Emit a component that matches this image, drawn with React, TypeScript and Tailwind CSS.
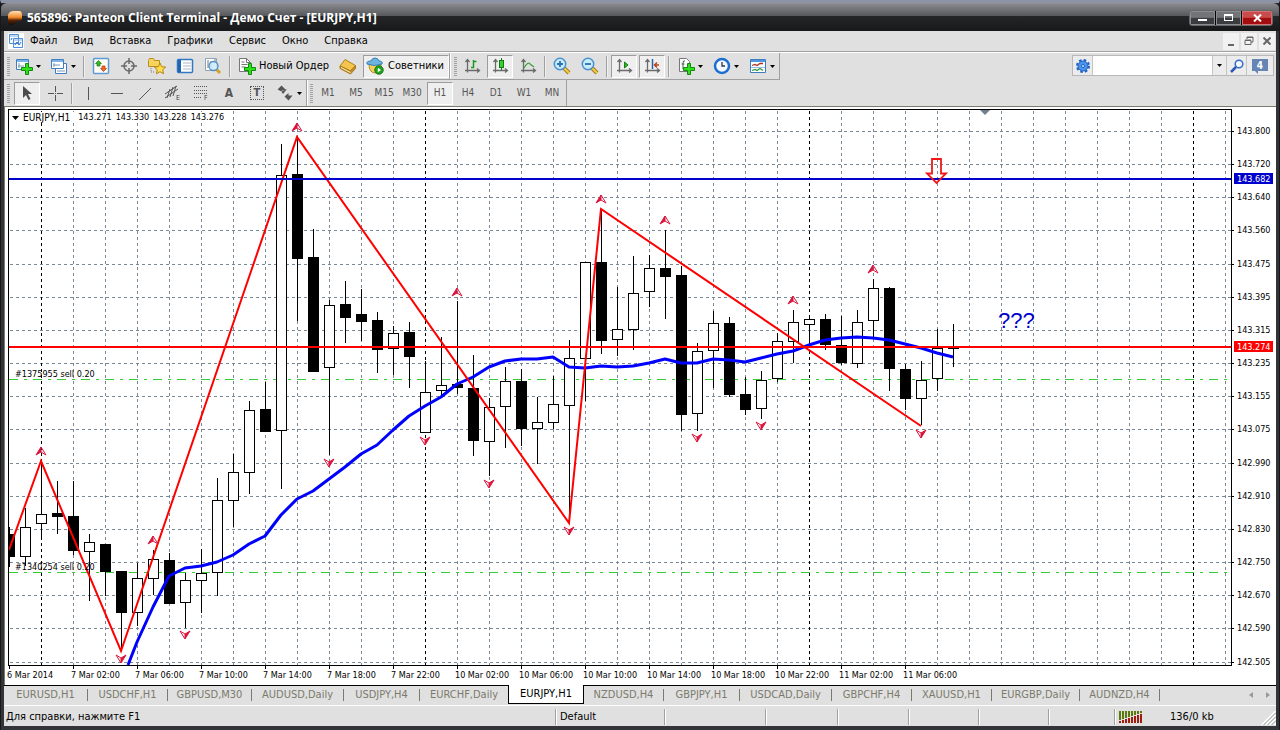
import type { ReactNode } from "react";

type Candle = [high: number, low: number, top: number, bottom: number, filled: boolean];

// one entry per hour: wick top, wick bottom, body top, body bottom, bearish
const candles: Candle[] = [
  [417, 457, 424, 447, true],
  [398, 456, 417, 447, false],
  [351, 427, 404, 414, false],
  [371, 424, 403, 407, true],
  [371, 445, 406, 441, true],
  [424, 491, 432, 442, false],
  [434, 486, 434, 462, true],
  [461, 540, 461, 503, true],
  [453, 516, 468, 503, false],
  [440, 485, 449, 469, false],
  [443, 494, 450, 494, true],
  [463, 518, 470, 493, false],
  [439, 503, 463, 471, false],
  [368, 486, 390, 463, false],
  [344, 417, 362, 391, false],
  [291, 384, 300, 363, false],
  [272, 322, 299, 322, true],
  [34, 379, 65, 321, false],
  [28, 211, 64, 149, true],
  [119, 262, 147, 262, true],
  [190, 345, 195, 258, false],
  [171, 233, 194, 208, true],
  [179, 231, 204, 212, true],
  [202, 263, 210, 240, true],
  [216, 265, 223, 239, false],
  [212, 278, 222, 247, true],
  [251, 323, 282, 323, false],
  [227, 287, 275, 281, false],
  [191, 284, 274, 278, true],
  [245, 346, 278, 331, true],
  [288, 366, 297, 332, false],
  [257, 338, 271, 297, false],
  [259, 336, 271, 319, true],
  [287, 354, 312, 319, false],
  [266, 319, 294, 313, false],
  [230, 403, 248, 296, false],
  [152, 291, 152, 249, false],
  [100, 244, 152, 231, true],
  [177, 246, 219, 230, false],
  [146, 240, 183, 220, false],
  [145, 197, 158, 182, false],
  [120, 209, 158, 167, true],
  [156, 321, 165, 305, true],
  [233, 321, 241, 304, false],
  [201, 278, 213, 241, false],
  [207, 287, 213, 285, true],
  [267, 305, 284, 300, true],
  [261, 309, 270, 299, false],
  [223, 272, 231, 269, false],
  [200, 253, 212, 232, false],
  [207, 237, 209, 215, false],
  [204, 240, 209, 235, true],
  [206, 255, 235, 253, true],
  [200, 258, 212, 254, false],
  [169, 227, 178, 211, false],
  [177, 281, 178, 259, true],
  [254, 300, 259, 289, true],
  [251, 315, 270, 289, false],
  [219, 281, 238, 269, false],
  [214, 257, 238, 239, true],
];

const average = [
  532, 497, 466, 458, 456, 452, 445, 434, 426, 405, 389, 381, 369, 357, 344, 335, 320, 306, 296, 287,
  274, 267, 257, 251, 249, 249, 247, 257, 258, 256, 257, 256, 253, 249, 253, 253, 249, 250, 252, 248,
  244, 241, 235, 230, 228, 227, 228, 230, 234, 238, 243, 247,
];

const zigzag = "0,440 32,351 112,541 288,27 560,413 592,99 912,316";

const upFractals = [[32, 341], [144, 430], [288, 17], [448, 182], [592, 89], [656, 110], [784, 190], [864, 159]];
const downFractals = [
  [112, 549], [176, 525], [320, 353], [416, 331], [480, 374], [560, 421], [688, 328], [752, 316], [912, 324],
];

const prices: [string, number][] = [
  ["143.800", 21], ["143.720", 54], ["143.640", 87], ["143.560", 120], ["143.475", 154], ["143.395", 187],
  ["143.315", 220], ["143.235", 253], ["143.155", 286], ["143.075", 319], ["142.990", 353], ["142.910", 386],
  ["142.830", 419], ["142.750", 452], ["142.670", 485], ["142.590", 518], ["142.505", 552],
];

const times = [
  "6 Mar 2014", "7 Mar 02:00", "7 Mar 06:00", "7 Mar 10:00", "7 Mar 14:00", "7 Mar 18:00", "7 Mar 22:00",
  "10 Mar 02:00", "10 Mar 06:00", "10 Mar 10:00", "10 Mar 14:00", "10 Mar 18:00", "10 Mar 22:00",
  "11 Mar 02:00", "11 Mar 06:00",
];

const tabs = [
  { name: "EURUSD,H1", width: "w-[84px]" },
  { name: "USDCHF,H1", width: "w-[80px]" },
  { name: "GBPUSD,M30", width: "w-[84px]" },
  { name: "AUDUSD,Daily", width: "w-[92px]" },
  { name: "USDJPY,H4", width: "w-[76px]" },
  { name: "EURCHF,Daily", width: "w-[88px]" },
  { name: "EURJPY,H1", width: "w-[76px]", active: true },
  { name: "NZDUSD,H4", width: "w-[80px]" },
  { name: "GBPJPY,H1", width: "w-[76px]" },
  { name: "USDCAD,Daily", width: "w-[92px]" },
  { name: "GBPCHF,H4", width: "w-[80px]" },
  { name: "XAUUSD,H1", width: "w-[80px]" },
  { name: "EURGBP,Daily", width: "w-[88px]" },
  { name: "AUDNZD,H4", width: "w-[80px]" },
];

const menu = ["Файл", "Вид", "Вставка", "Графики", "Сервис", "Окно", "Справка"];
const periods = ["M1", "M5", "M15", "M30", "H1", "H4", "D1", "W1", "MN"];

function Icon({ children }: { children: ReactNode }) {
  return (
    <svg width="18" height="18" viewBox="0 0 18 18" fill="none" className="shrink-0" aria-hidden>
      {children}
    </svg>
  );
}

function Caret() {
  return (
    <svg width="5" height="3" viewBox="0 0 5 3" className="shrink-0" aria-hidden>
      <path d="M0 0h5L2.500 3z" fill="#000" />
    </svg>
  );
}

function ToolButton({ label, pressed, menu, children }: { label: string; pressed?: boolean; menu?: boolean; children: ReactNode }) {
  return (
    <button
      aria-label={label}
      aria-pressed={pressed}
      className={`flex h-[23px] shrink-0 items-center ${menu ? "w-[34px] gap-[3px] pl-1" : "w-[26px] justify-center"} ${
        pressed ? "border border-b-white border-r-white border-l-[#9c9c9c] border-t-[#9c9c9c] bg-[#efefef]" : ""
      }`}
    >
      {children}
      {menu && <Caret />}
    </button>
  );
}

function Grip() {
  return (
    <div className="h-[19px] w-[3px] shrink-0 bg-[repeating-linear-gradient(180deg,#a2a2a2_0px,#a2a2a2_1px,#e0e0e0_1px,#e0e0e0_2px)]" />
  );
}

function Divider() {
  return <div className="mx-[1px] h-[21px] w-[2px] shrink-0 border-l border-[#a0a0a0] bg-[#f0f0f0]" />;
}

function Plus() {
  return <path d="M10.500 6.500h3v4h4v3h-4v4h-3v-4h-4v-3h4z" fill="#2fe01c" stroke="#118a0c" />;
}

function Axes() {
  return <path d="M4.500 3v12.500M2 13.500h14M2.500 5l2-2.500 2 2.500M14 11.500l2.500 2-2.500 2" stroke="#6b6b6b" strokeWidth="1.300" />;
}

function Magnifier({ plus }: { plus?: boolean }) {
  return (
    <Icon>
      <path d="M11 11l5 5" stroke="#a8781c" strokeWidth="4" />
      <path d="M11 11l5 5" stroke="#f3cf4a" strokeWidth="2" />
      <circle cx="7" cy="7" r="5.700" fill="#c6edf8" stroke="#4a90cf" strokeWidth="1.500" />
      <path d={plus ? "M4 7h6M7 4v6" : "M4 7h6"} stroke="#2f6fb4" strokeWidth="1.800" />
    </Icon>
  );
}

function TitleBar() {
  return (
    <header className="flex h-[28px] items-center rounded-t-md border-t border-[#8f9095] bg-[linear-gradient(180deg,#88898c_0%,#56575a_45%,#252628_46%,#17181a_100%)] pl-[6px] pr-[7px]">
      <svg width="16" height="16" viewBox="0 0 16 16" aria-hidden>
        <defs>
          <linearGradient id="logo" x1="0" y1="0" x2="0" y2="1">
            <stop offset="0" stopColor="#ffe0b0" />
            <stop offset=".45" stopColor="#f28a2c" />
            <stop offset=".65" stopColor="#5a2708" />
            <stop offset="1" stopColor="#170a04" />
          </linearGradient>
        </defs>
        <path d="M1 5q1-4 6-4h5q3 0 3 4v3q0 3-3 3-3 0-4 2-1 2-4 2-3 0-3-4z" fill="url(#logo)" />
      </svg>
      <h1 className="ml-1 flex-1 whitespace-nowrap font-['Open_Sans','Noto_Sans',sans-serif] text-[12px] font-bold leading-4 text-white">
        565896: Panteon Client Terminal - Демо Счет - [EURJPY,H1]
      </h1>
      <div className="flex h-[14px] gap-px rounded-xs bg-black outline outline-[#66676a]">
        <button aria-label="Minimize" className="flex w-[25px] items-center justify-center border border-[#8c8d90] bg-[linear-gradient(180deg,#737477_45%,#3b3c3f_50%)]">
          <span className="mt-1 h-[2px] w-[9px] bg-white" />
        </button>
        <button aria-label="Maximize" className="flex w-[25px] items-center justify-center border border-[#8c8d90] bg-[linear-gradient(180deg,#737477_45%,#3b3c3f_50%)]">
          <span className="h-[7px] w-[9px] border border-t-2 border-white" />
        </button>
        <button aria-label="Close" className="flex w-[30px] items-center justify-center border border-[#d27373] bg-[linear-gradient(180deg,#c94b4b_45%,#a30d10_50%)]">
          <svg width="9" height="8" viewBox="0 0 9 8" aria-hidden>
            <path d="M1 0.500l7 7M8 0.500l-7 7" stroke="#fff" strokeWidth="2" />
          </svg>
        </button>
      </div>
    </header>
  );
}

function MenuBar() {
  return (
    <nav className="flex h-[20px] items-center bg-[#e0e0e0] pl-1">
      <svg width="16" height="16" viewBox="0 0 16 16" className="bg-white" fill="none" aria-hidden>
        <path d="M1.500 1.500h9v9h-9zM5.500 5.500h9v9h-9z" fill="#f4f9ff" stroke="#4d8fd8" />
        <path d="M2 3h8M6 7h8" stroke="#8ab6e8" />
        <path d="M7 12l2-3 2 3 2-3M3 7l1-2" stroke="#2f6fc0" />
      </svg>
      <ul className="-ml-[2px] flex text-[11px] leading-4">
        {menu.map((item) => (
          <li key={item}>
            <button className="px-2">{item}</button>
          </li>
        ))}
      </ul>
      <div className="ml-auto flex gap-[2px] pr-px text-[#5c5c5c]">
        <button aria-label="Minimize chart" className="flex h-[17px] w-4 items-center justify-center bg-[#f1f1f1]">
          <span className="mt-2 h-[2px] w-[6px] bg-[#666]" />
        </button>
        <button aria-label="Restore chart" className="flex h-[17px] w-4 items-center justify-center bg-[#f1f1f1]">
          <svg width="10" height="10" viewBox="0 0 10 10" fill="none" aria-hidden>
            <path d="M3 3V1h6v5H7M1 4.500h6v4H1zM1 4h6M3 1.500h6" stroke="#666" />
          </svg>
        </button>
        <button aria-label="Close chart" className="flex h-[17px] w-4 items-center justify-center bg-[#f1f1f1]">
          <svg width="8" height="8" viewBox="0 0 8 8" aria-hidden>
            <path d="M.5.5l7 7M7.500.5l-7 7" stroke="#666" strokeWidth="2" />
          </svg>
        </button>
      </div>
    </nav>
  );
}

function StandardToolbar() {
  return (
    <div className="flex h-[27px] items-center border-b border-[#a0a0a0] pl-[3px]">
      <Grip />
      <div className="ml-px flex items-center gap-px">
        <ToolButton label="New chart" menu>
          <Icon>
            <path d="M1.500 2.500h12v10h-12z" fill="#fff" stroke="#3f7fc0" />
            <path d="M2 4h11" stroke="#7fb2e6" strokeWidth="2" />
            <path d="M4 6v5M3 9h6" stroke="#7a96b8" />
            <Plus />
          </Icon>
        </ToolButton>
        <ToolButton label="Profiles" menu>
          <Icon>
            <path d="M5.500 6.500h11v10h-11z" fill="#fff" stroke="#3f7fc0" />
            <path d="M1.500 2.500h12v9h-12z" fill="#fff" stroke="#3f7fc0" />
            <path d="M2 4h11" stroke="#7fb2e6" strokeWidth="2" />
            <path d="M4 6v4M3 8h7M7 14h8" stroke="#7a96b8" />
          </Icon>
        </ToolButton>
      </div>
      <div className="ml-[2px] flex items-center gap-[2px]">
        <Divider />
        <ToolButton label="Market watch">
          <Icon>
            <rect x="1.500" y="1.500" width="15" height="15" rx="1" fill="#fffef5" stroke="#5c9bd8" strokeWidth="1.500" />
            <path d="M6.500 3.500l3 3H8v2.500H5V6.500H3.500z" fill="#34b926" stroke="#1b7a12" strokeWidth=".7" />
            <path d="M11.500 14.500l-3-3H10V9h3v2.500h1.500z" fill="#f0692c" stroke="#b33b0c" strokeWidth=".7" />
          </Icon>
        </ToolButton>
        <ToolButton label="Data window">
          <Icon>
            <circle cx="9" cy="9" r="5" stroke="#6a6a6a" strokeWidth="1.500" />
            <path d="M9 1v6M9 11v6M1 9h6M11 9h6" stroke="#6a6a6a" strokeWidth="1.500" />
          </Icon>
        </ToolButton>
        <ToolButton label="Navigator">
          <Icon>
            <path d="M.5 3.500l1-2h4l1 2h5v6H.5z" fill="#f7d45c" stroke="#b98d20" />
            <path d="M3 11v4h4" stroke="#777" strokeDasharray="1 1" />
            <path d="M12 6l1.700 3.700 4 .4-3 2.700.9 4-3.600-2.100-3.600 2.100.9-4-3-2.700 4-.4z" fill="#ffdf4f" stroke="#b98412" />
          </Icon>
        </ToolButton>
        <ToolButton label="Terminal">
          <Icon>
            <rect x="1.500" y="2.500" width="15" height="13" rx="1" fill="#fff" stroke="#2f78c4" strokeWidth="1.500" />
            <path d="M3.500 3v12" stroke="#2164b0" strokeWidth="3" />
            <path d="M7 6h8M7 9h8M7 12h8" stroke="#a9b7c6" />
          </Icon>
        </ToolButton>
        <ToolButton label="Strategy tester">
          <Icon>
            <path d="M1.500 1.500h11v12h-11z" fill="#fff" stroke="#8fa3b8" />
            <path d="M4 3v8M7 4v7M11 2v4" stroke="#7a7a7a" />
            <path d="M12 12l4 4" stroke="#d6a021" strokeWidth="3" />
            <circle cx="9.500" cy="9" r="4.500" fill="#cdeafa" fillOpacity=".85" stroke="#4c8fca" strokeWidth="1.300" />
          </Icon>
        </ToolButton>
        <Divider />
        <button className="flex h-[23px] w-[99px] shrink-0 items-center gap-[3px] whitespace-nowrap pl-1 text-[11px]">
          <Icon>
            <path d="M1.500 1.500h7l4 4v9h-11z" fill="#fff" stroke="#777" />
            <path d="M8.500 1.500v4h4M3.500 5h3M3.500 7.500h6M3.500 10h4" stroke="#777" />
            <Plus />
          </Icon>
          Новый Ордер
        </button>
        <ToolButton label="MetaEditor">
          <Icon>
            <path d="M6 2.500l10.500 6-5 5.500L1 9z" fill="#f3c54c" stroke="#b0811c" />
            <path d="M1 9v2.500L11.500 17l5-5.500v-3L11.500 14z" fill="#c7922a" stroke="#a87718" />
            <path d="M2 10.500l9.500 5" stroke="#fff3c0" />
          </Icon>
        </ToolButton>
        <button
          aria-pressed
          className="flex h-[23px] w-[86px] shrink-0 items-center gap-1 whitespace-nowrap border border-b-white border-l-[#9c9c9c] border-r-white border-t-[#9c9c9c] bg-[#efefef] pl-[2px] text-[11px]"
        >
          <Icon>
            <path d="M3 7q0 9 6.500 9T15 7z" fill="#f5cf55" stroke="#b58a24" />
            <path d="M1 7q-1-3 4-3 1-3 4-3t4 3q4 0 3 3-7 3-15 0z" fill="#6db3df" stroke="#3580b4" />
            <circle cx="13" cy="13" r="4.200" fill="#23a522" stroke="#0f7414" />
            <path d="M11.800 10.800l3.200 2.200-3.200 2.200z" fill="#fff" />
          </Icon>
          Советники
        </button>
      </div>
      <div className="h-full w-[2px] shrink-0 border-l border-[#a0a0a0] bg-white" />
      <div className="ml-[3px] flex h-full items-center gap-[2px] border-r border-[#a0a0a0]">
        <Grip />
        <ToolButton label="Bar chart">
          <Icon>
            <Axes />
            <path d="M10.500 3v8M10.500 4.500h3M8 10.500h3" stroke="#1e9a1d" strokeWidth="1.500" />
          </Icon>
        </ToolButton>
        <ToolButton label="Candlesticks" pressed>
          <Icon>
            <Axes />
            <path d="M10.500 1v12" stroke="#137a12" />
            <rect x="8.500" y="3.500" width="4" height="7" fill="#36d22c" stroke="#137a12" />
          </Icon>
        </ToolButton>
        <ToolButton label="Line chart">
          <Icon>
            <Axes />
            <path d="M5 11q4-7 6-4l4 3" stroke="#3da33a" strokeWidth="1.300" />
          </Icon>
        </ToolButton>
        <Divider />
        <ToolButton label="Zoom in">
          <Magnifier plus />
        </ToolButton>
        <ToolButton label="Zoom out">
          <Magnifier />
        </ToolButton>
        <Divider />
        <ToolButton label="Auto scroll" pressed>
          <Icon>
            <Axes />
            <path d="M9.500 5v6l3.500-3z" fill="#2eb82b" stroke="#168015" />
          </Icon>
        </ToolButton>
        <ToolButton label="Chart shift" pressed>
          <Icon>
            <Axes />
            <path d="M9.500 2v10" stroke="#2860a8" strokeWidth="1.500" />
            <path d="M16 8h-4M14 5.500L11.500 8l2.500 2.500" stroke="#c0401c" strokeWidth="1.500" />
          </Icon>
        </ToolButton>
        <Divider />
        <ToolButton label="Indicators" menu>
          <Icon>
            <path d="M2.500 1.500h7l3 3v10h-10z" fill="#fff" stroke="#777" />
            <path d="M8 4q-2-1-2 2v6M4.500 7h3" stroke="#555" />
            <Plus />
          </Icon>
        </ToolButton>
        <ToolButton label="Periods" menu>
          <Icon>
            <circle cx="9" cy="9" r="7" fill="#f3f9ff" stroke="#1c6fd0" strokeWidth="2.500" />
            <path d="M9 5v4h3" stroke="#334" strokeWidth="1.300" />
          </Icon>
        </ToolButton>
        <ToolButton label="Templates" menu>
          <Icon>
            <path d="M1.500 2.500h15v13h-15z" fill="#fff" stroke="#3d7dc0" />
            <path d="M2 4h14" stroke="#4f96df" strokeWidth="2" />
            <path d="M3 8.500l3-1 2 1 3-2 3 0" stroke="#a83220" strokeWidth="1.300" />
            <path d="M3 13.500l3-1 2 1 3-2 3 2" stroke="#2d9a3c" strokeWidth="1.300" />
            <path d="M2 10.500h14" stroke="#9abbe0" />
          </Icon>
        </ToolButton>
      </div>
    </div>
  );
}

function SearchBox() {
  return (
    <form className="mr-[2px] mt-[3px] flex h-[21px] shrink-0 border border-[#b8b8b8] bg-[#ececec]">
      <button type="button" aria-label="Search settings" className="flex w-[19px] items-center justify-center">
        <svg width="16" height="16" viewBox="0 0 16 16" fill="none" aria-hidden>
          <circle cx="8" cy="8" r="6" stroke="#1d62c4" strokeWidth="2" strokeDasharray="2.600 2.100" />
          <circle cx="8" cy="8" r="5" fill="#4a94ea" stroke="#1d62c4" />
          <circle cx="8" cy="8" r="1.500" fill="#dbeaff" stroke="#1d62c4" />
        </svg>
      </button>
      <input aria-label="Search" className="w-[121px] border-x border-[#c4c4c4] bg-white px-1 text-[11px] outline-none" />
      <button type="button" aria-label="Search history" className="flex w-[14px] items-center justify-center border-r border-[#c4c4c4]">
        <Caret />
      </button>
      <button aria-label="Find" className="flex w-[20px] items-center justify-center border-r border-[#c4c4c4]">
        <svg width="14" height="14" viewBox="0 0 14 14" fill="none" aria-hidden>
          <circle cx="9" cy="5" r="3.800" fill="#f2f8ff" stroke="#3467c8" strokeWidth="1.500" />
          <path d="M6 8l-5 5" stroke="#2c58b4" strokeWidth="2.500" />
        </svg>
      </button>
      <button type="button" aria-label="Messages" className="flex w-[26px] items-center justify-center">
        <svg width="16" height="16" viewBox="0 0 16 16">
          <path d="M0 1h16v12H6v3l-3-3H0z" fill="#6684b4" />
          <text x="8" y="11" textAnchor="middle" fontSize="10" fontWeight="bold" fill="#fff">4</text>
        </svg>
      </button>
    </form>
  );
}

function LineToolbar() {
  return (
    <div className="flex h-[26px] items-center pl-[3px] text-[#555]">
      <Grip />
      <div className="ml-1 flex items-center gap-[2px]">
        <ToolButton label="Cursor" pressed>
          <Icon>
            <path d="M5 2v12l3-3 2.500 5 2-1-2.500-5h4z" fill="#4c4c4c" />
          </Icon>
        </ToolButton>
        <ToolButton label="Crosshair">
          <Icon>
            <path d="M9.500 2v6M9.500 11v6M2 9.500h6M11 9.500h6M9 9.500h1" stroke="#555" />
          </Icon>
        </ToolButton>
        <Divider />
        <ToolButton label="Vertical line">
          <Icon>
            <path d="M8.500 3v13" stroke="#555" />
          </Icon>
        </ToolButton>
        <ToolButton label="Horizontal line">
          <Icon>
            <path d="M3 9.500h12" stroke="#555" />
          </Icon>
        </ToolButton>
        <ToolButton label="Trend line">
          <Icon>
            <path d="M3 16L15 4" stroke="#555" />
          </Icon>
        </ToolButton>
        <ToolButton label="Equidistant channel">
          <Icon>
            <path d="M1 10L13 2M1 14L14 5M3 14L6 5M6 13L9 3M9 12l3-10" stroke="#555" />
            <text x="12" y="16" fontSize="7" fill="#444">E</text>
          </Icon>
        </ToolButton>
        <ToolButton label="Fibonacci retracement">
          <Icon>
            <path d="M2 2.500h14M2 6.500h14M2 9.500h14M2 13.500h8" stroke="#555" strokeDasharray="1 1" />
            <text x="12" y="16" fontSize="7" fill="#444">F</text>
          </Icon>
        </ToolButton>
        <ToolButton label="Text">
          <span className="text-[12px] font-bold leading-4">A</span>
        </ToolButton>
        <ToolButton label="Text label">
          <span className="flex size-[14px] items-center justify-center border border-dotted border-[#555] text-[11px] font-bold leading-3">T</span>
        </ToolButton>
        <ToolButton label="Arrows" menu>
          <Icon>
            <path d="M5.500 1.500l4 4-4 2-4-2zM5 7l2 3 4-5M12.500 9v2.500h4l-4 5-4-4z" fill="#555" />
          </Icon>
        </ToolButton>
      </div>
      <div className="h-full w-[2px] shrink-0 border-l border-[#a0a0a0] bg-white" />
      <div className="ml-[2px] flex h-full items-center gap-[2px] border-r border-[#a0a0a0] pr-px">
        <Grip />
        {periods.map((period) => (
          <button
            key={period}
            aria-pressed={period === "H1"}
            className={`h-[23px] w-[26px] shrink-0 text-center text-[10px] leading-5 ${
              period === "H1" ? "border border-b-white border-l-[#9c9c9c] border-r-white border-t-[#9c9c9c] bg-[#efefef]" : ""
            }`}
          >
            {period}
          </button>
        ))}
      </div>
    </div>
  );
}

function Grid() {
  return (
    <g shapeRendering="crispEdges" strokeDasharray="3 3">
      {prices.map(([price, y]) => (
        <line key={price} x1="1" x2="100%" y1={y + 0.5} y2={y + 0.5} stroke="#778899" />
      ))}
      {Array.from({ length: 38 }, (_, i) => 32 + i * 32).map((x) => (
        <line key={x} x1={x + 0.5} x2={x + 0.5} y1="1" y2="100%" stroke={x % 384 === 32 ? "#000" : "#778899"} />
      ))}
    </g>
  );
}

function Plot() {
  return (
    <svg className="block h-full w-full" aria-label="EURJPY hourly chart" role="img">
      <Grid />
      <g stroke="#32cd32" strokeDasharray="9 6 3 6" shapeRendering="crispEdges">
        <line x1="0" x2="100%" y1="269.500" y2="269.500" />
        <line x1="0" x2="100%" y1="462.500" y2="462.500" />
      </g>
      <g shapeRendering="crispEdges">
        {candles.map(([high, low, top, bottom, filled], i) => (
          <g key={i}>
            <rect x={i * 16} y={high} width="1" height={low - high} fill="#000" />
            <rect x={i * 16 - 5} y={top} width="11" height={Math.max(bottom - top, 1)} fill="#000" />
            {!filled && <rect x={i * 16 - 4} y={top + 1} width="9" height={bottom - top - 2} fill="#fff" />}
          </g>
        ))}
      </g>
      <polyline
        points={`119,555 ${average.map((y, i) => `${128 + i * 16},${y}`).join(" ")}`}
        fill="none"
        stroke="#0000ff"
        strokeWidth="3"
        strokeLinejoin="round"
      />
      <polyline points={zigzag} fill="none" stroke="#ff0000" strokeWidth="2" />
      <g fill="#dc143c" stroke="#dc143c">
        {upFractals.map(([x, y]) => (
          <g key={x}>
            <path d={`M${x} ${y - 4}L${x - 5} ${y + 4}L${x} ${y + 1}z`} />
            <path d={`M${x} ${y - 4}L${x + 5} ${y + 4}L${x} ${y + 1}`} fill="none" />
          </g>
        ))}
        {downFractals.map(([x, y]) => (
          <g key={x}>
            <path d={`M${x} ${y + 4}L${x + 5} ${y - 4}L${x} ${y - 1}z`} />
            <path d={`M${x} ${y + 4}L${x - 5} ${y - 4}L${x} ${y - 1}`} fill="none" />
          </g>
        ))}
      </g>
      <rect x="0" y="68" width="100%" height="2" fill="#0000cd" />
      <rect x="0" y="236" width="100%" height="2" fill="#ff0000" />
      <path d="M923 49h9v14.500h5L927.500 73 918 63.500h5z" fill="none" stroke="#f01818" strokeWidth="1.800" />
      <path d="M971 0h10l-5 5z" fill="#708090" />
      <text x="989" y="218" fontSize="22" fill="#0000cd" className="font-['Liberation_Sans',sans-serif]">
        ???
      </text>
      <g fontSize="9" fill="#000">
        <text x="6" y="267">#1375955 sell 0.20</text>
        <text x="6" y="460">#1340254 sell 0.20</text>
      </g>
    </svg>
  );
}

function Chart() {
  return (
    <main className="grid flex-1 grid-cols-[minmax(0,1fr)_44px] grid-rows-[minmax(557px,1fr)_19px] border-l border-t border-[#7b7b70] bg-white pl-[3px] pt-[2px]">
      <div className="relative overflow-hidden border border-black">
        <Plot />
        <button className="absolute left-[3px] top-[2px] flex items-center gap-1 bg-white text-[9px] leading-[11px]">
          <svg width="7" height="4" viewBox="0 0 7 4" aria-hidden>
            <path d="M0 0h7L3.500 4z" fill="#000" />
          </svg>
          <span className="mr-1 text-[10px]">EURJPY,H1</span>
          <span>143.271</span>
          <span>143.330</span>
          <span>143.228</span>
          <span>143.276</span>
        </button>
      </div>
      <svg className="block h-full w-full overflow-visible" fontSize="9" role="img" aria-label="Price scale">
        {prices.map(([price, y]) => (
          <g key={price}>
            <rect y={y + 1} width="2" height="1" fill="#000" />
            <text x="5" y={y + 4}>{price}</text>
          </g>
        ))}
        <rect x="2" y="64" width="39" height="11" fill="#0000cd" />
        <rect x="2" y="232" width="39" height="11" fill="#ff0000" />
        <g fill="#fff">
          <text x="5" y="73">143.682</text>
          <text x="5" y="241">143.274</text>
        </g>
      </svg>
      <svg className="block h-full w-full overflow-visible" fontSize="9" role="img" aria-label="Time scale">
        {times.map((time, i) => (
          <g key={time}>
            <rect x={1 + i * 64} width="1" height="3" fill="#000" />
            <text x={i * 64 - 1} y="12">{time}</text>
          </g>
        ))}
      </svg>
    </main>
  );
}

function ChartTabs() {
  return (
    <div className="flex h-[21px] items-start border-b border-white bg-[#e0e0e0] text-[11px] text-[#7b7a6c]">
      <div role="tablist" className="flex shrink-0">
        {tabs.map(({ name, width, active }, i) => (
          <button
            key={name}
            role="tab"
            aria-selected={!!active}
            className={`${width} h-[19px] shrink-0 whitespace-nowrap text-center ${
              active ? "border border-t-0 border-black bg-white text-black" : "border-t border-black"
            }`}
          >
            <span className={`block ${active || i === 5 ? "" : "border-r border-[#7b7a6c]"} my-[2px] leading-3`}>{name}</span>
          </button>
        ))}
      </div>
      <div className="flex h-[19px] flex-1 items-center justify-end gap-[13px] border-t border-black pr-[6px]">
        <button aria-label="Scroll tabs left">
          <svg width="4" height="6" viewBox="0 0 4 6" className="block">
            <path d="M4 0v6L0 3z" fill="#999" />
          </svg>
        </button>
        <button aria-label="Scroll tabs right">
          <svg width="4" height="6" viewBox="0 0 4 6" className="block">
            <path d="M0 0v6l4-3z" fill="#999" />
          </svg>
        </button>
      </div>
    </div>
  );
}

function StatusBar() {
  const cell = "h-[16px] shrink-0 border-l border-[#a0a0a0] shadow-[inset_1px_0_0_#fff]";
  return (
    <footer className="flex h-[20px] items-center bg-[#e0e0e0] pt-px text-[11px] leading-4">
      <p className="flex-1 whitespace-nowrap pl-[2px]">Для справки, нажмите F1</p>
      <div className={`${cell} w-[109px] pl-1`}>Default</div>
      <div className={`${cell} w-[101px]`} />
      <div className={`${cell} w-[72px]`} />
      <div className={`${cell} w-[71px]`} />
      <div className={`${cell} w-[70px]`} />
      <div className={`${cell} w-[70px]`} />
      <div className={`${cell} w-[66px]`} />
      <div className={`${cell} flex w-[162px] items-center pl-1`}>
        <svg width="24" height="12" viewBox="0 0 24 12" shapeRendering="crispEdges" aria-label="Connection" role="img">
          {Array.from({ length: 8 }, (_, i) => (
            <g key={i}>
              <rect x={i * 3} width="2" height={9 - i} fill="#5a7a0c" />
              <rect x={i * 3} y={10 - i} width="2" height={2 + i} fill="#a01c10" />
            </g>
          ))}
        </svg>
        <span className="ml-[27px]">136/0 kb</span>
        <svg width="15" height="14" viewBox="0 0 15 14" className="ml-auto self-end" aria-hidden>
          <path d="M1 14L15 0M5 14L15 4M9 14l6-6M13 14l2-2" stroke="#fff" strokeWidth="2" />
          <path d="M2.500 14L15 1.500M6.500 14L15 5.500M10.500 14L15 9.500" stroke="#999" />
        </svg>
      </div>
    </footer>
  );
}

export default function App() {
  return (
    <div className="flex min-h-screen flex-col border-x border-t-3 border-x-[#17181a] border-t-[#8d94a8] bg-[#242528] font-['DejaVu_Sans_Condensed','DejaVu_Sans','Noto_Sans',sans-serif] text-black">
      <TitleBar />
      <div className="flex flex-1 flex-col border-x-3 border-b-4 border-[#333437] bg-[#e0e0e0]">
        <MenuBar />
        <div className="flex justify-between border-t border-[#a0a0a0] shadow-[inset_0_1px_0_#fff]">
          <div className="pt-px">
            <StandardToolbar />
            <LineToolbar />
          </div>
          <SearchBox />
        </div>
        <Chart />
        <ChartTabs />
        <StatusBar />
      </div>
    </div>
  );
}
